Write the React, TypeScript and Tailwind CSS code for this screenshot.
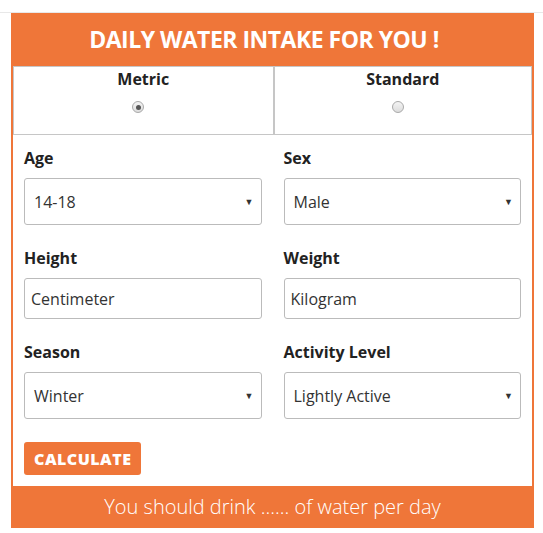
import React from "react"

const orange = "bg-[#ef7639]"

function Radio({ checked }: { checked?: boolean }) {
  return (
    <span className="mr-[10px] flex h-[12px] w-[12px] items-center justify-center rounded-full border border-[#a9a9a9] bg-gradient-to-b from-[#f4f4f4] to-[#dcdcdc]">
      {checked && <span className="h-[5px] w-[5px] rounded-full bg-[#555]"></span>}
    </span>
  )
}

function Field({ label, value, select }: { label: string; value: string; select?: boolean }) {
  return (
    <div className="flex flex-col">
      <div className="text-[16px] font-bold leading-[20px] text-[#222]">{label}</div>
      {select ? (
        <div className="mt-[10px] flex h-[47px] items-center justify-between rounded-[3px] border border-[#bbb] bg-white pl-[9px] pr-[7px] text-[16px] text-[#333]">
          <span>{value}</span>
          <span className="text-[9px] text-[#333]">▼</span>
        </div>
      ) : (
        <div className="mt-[10px] flex h-[41px] items-center rounded-[3px] border border-[#bbb] bg-white pl-[6px] text-[16px] text-[#333]">
          {value}
        </div>
      )}
    </div>
  )
}

export default function App() {
  return (
    <div className="h-[533px] w-[543px] bg-white pt-[12px]" style={{ fontFamily: "'Open Sans', 'Liberation Sans', sans-serif" }}>
      <div className="h-px w-full bg-[#e8e8e8]"></div>
      <div className={`mx-[11px] w-[523px] ${orange} px-[2px]`}>
        <h1 className="flex h-[53px] items-center justify-center pr-[17px] text-[23px] font-bold tracking-[-0.5px] text-white">
          DAILY WATER INTAKE FOR YOU !
        </h1>
        <div className="bg-white">
          <div className="grid grid-cols-2 border border-[#c6c6c6]">
            <div className="flex h-[67px] flex-col items-center gap-[10px]">
              <span className="text-[16px] font-bold text-[#222]">Metric</span>
              <Radio checked />
            </div>
            <div className="flex h-[67px] flex-col items-center gap-[10px] border-l-2 border-[#c6c6c6]">
              <span className="text-[16px] font-bold text-[#222]">Standard</span>
              <Radio />
            </div>
          </div>
          <div className="grid grid-cols-2 gap-x-[22px] gap-y-[23px] px-[11px] pt-[13px]">
            <Field label="Age" value="14-18" select />
            <Field label="Sex" value="Male" select />
            <Field label="Height" value="Centimeter" />
            <Field label="Weight" value="Kilogram" />
            <Field label="Season" value="Winter" select />
            <Field label="Activity Level" value="Lightly Active" select />
          </div>
          <div className="px-[11px] pb-[11px] pt-[23px]">
            <button className={`h-[33px] rounded-[3px] ${orange} px-[10px] text-[16px] font-extrabold uppercase tracking-[0.5px] text-white`}>
              Calculate
            </button>
          </div>
        </div>
        <div className="flex h-[42px] items-center justify-center text-[20px] font-light text-white">
          You should drink ...... of water per day
        </div>
      </div>
    </div>
  )
}
